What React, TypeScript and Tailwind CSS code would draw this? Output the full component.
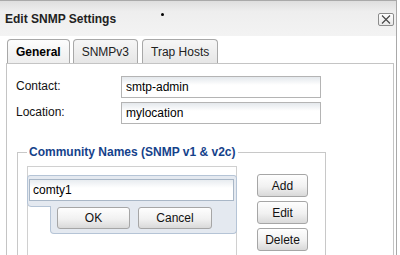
import * as React from "react"

function Tab({ label, active }: { label: string; active?: boolean }) {
  return (
    <div
      className={
        "h-[24px] px-[8px] flex items-center border border-b-0 border-[#a8a8a8] rounded-t-[4px] " +
        (active
          ? "font-bold bg-linear-to-b from-[#fdfdfd] to-[#eeeeee]"
          : "bg-linear-to-b from-[#f6f6f6] to-[#e6e6e6] text-[#222]")
      }
    >
      {label}
    </div>
  )
}

function Btn({ label, className }: { label: string; className?: string }) {
  return (
    <button
      className={
        "flex items-center justify-center border border-[#a6a6a6] rounded-[3px] bg-linear-to-b from-[#fefefe] via-[#f1f1f1] via-55% to-[#d9d9d9] text-[#111] " +
        (className ?? "")
      }
    >
      {label}
    </button>
  )
}

function Field({ label, value }: { label: string; value: string }) {
  return (
    <div className="flex items-start">
      <div className="w-[105px] pt-[3px] text-[#111]">{label}</div>
      <div className="w-[200px] h-[22px] border border-[#b4b4b4] bg-linear-to-b from-[#e4e8ec] to-white to-40% flex items-center pl-[4px]">
        {value}
      </div>
    </div>
  )
}

export default function App() {
  return (
    <div className="w-[400px] h-[255px] overflow-hidden bg-white relative font-['Liberation_Sans',Arial,sans-serif] text-[12px] leading-[14px] text-black">
      <div className="w-[397px] h-full border-r border-t border-[#a9a9a9]">
        {/* Title bar */}
        <div className="h-[35px] flex items-center justify-between pl-[5px] pr-[2px] bg-linear-to-b from-[#dedede] via-[#eeeeee] via-30% to-[#f3f3f3]">
          <span className="font-bold text-[#222]">Edit SNMP Settings</span>
          <div className="w-[16px] h-[13px] mt-[1px] border border-[#8c8c8c] rounded-[2px] bg-linear-to-b from-white to-[#e8e8e8] flex items-center justify-center">
            <svg width="10" height="9" viewBox="0 0 10 9">
              <path d="M1 0.5 L9 8.5 M9 0.5 L1 8.5" stroke="#444" strokeWidth="1.1" fill="none" />
            </svg>
          </div>
        </div>
        <div className="absolute left-[161px] top-[13px] w-[3px] h-[3px] rounded-full bg-black" />

        {/* Tabs */}
        <div className="flex items-end gap-[3px] pl-[7px] h-[27px] bg-white">
          <Tab label="General" active />
          <Tab label="SNMPv3" />
          <div className="ml-[1px]">
            <Tab label="Trap Hosts" />
          </div>
        </div>

        {/* Panel */}
        <div className="ml-[6px] w-[388px] h-[220px] border border-[#c4c4c4] bg-white pt-[12px] pl-[9px]">
          <div className="flex flex-col gap-[4px]">
            <Field label="Contact:" value="smtp-admin" />
            <Field label="Location:" value="mylocation" />
          </div>

          <fieldset className="mt-[21px] ml-[1px] w-[309px] h-[140px] border border-[#c8c8c8]">
            <legend className="ml-[9px] px-[2px] font-bold text-[#15428b]">
              Community Names (SNMP v1 &amp; v2c)
            </legend>
            <div className="flex pt-[7px] pl-[9px] gap-[20px]">
              <div className="relative w-[210px] h-[120px] border border-[#d0d0d0] bg-white">
                <div className="absolute left-[-1px] top-[8px] w-[210px]">
                  <div className="h-[32px] border border-[#b5c4d6] rounded-t-[3px] rounded-bl-[4px] bg-[#e4e9f0] pt-[3px] pl-[1px]">
                    <div className="w-[205px] h-[22px] border border-[#a9b7c7] bg-linear-to-b from-[#e8ecf0] to-white to-40% flex items-center pl-[3px]">
                      comty1
                    </div>
                  </div>
                  <div className="absolute left-[23px] top-[31px] w-[187px] h-[28px] border border-t-0 border-[#b5c4d6] rounded-b-[4px] bg-[#e4e9f0] flex pt-[1px] pl-[6px] gap-[8px]">
                    <Btn label="OK" className="w-[73px] h-[22px]" />
                    <Btn label="Cancel" className="w-[74px] h-[22px]" />
                  </div>
                </div>
              </div>
              <div className="flex flex-col gap-[4px] mt-[8px]">
                <Btn label="Add" className="w-[51px] h-[23px]" />
                <Btn label="Edit" className="w-[51px] h-[23px]" />
                <Btn label="Delete" className="w-[51px] h-[23px]" />
              </div>
            </div>
          </fieldset>
        </div>
      </div>
    </div>
  )
}
